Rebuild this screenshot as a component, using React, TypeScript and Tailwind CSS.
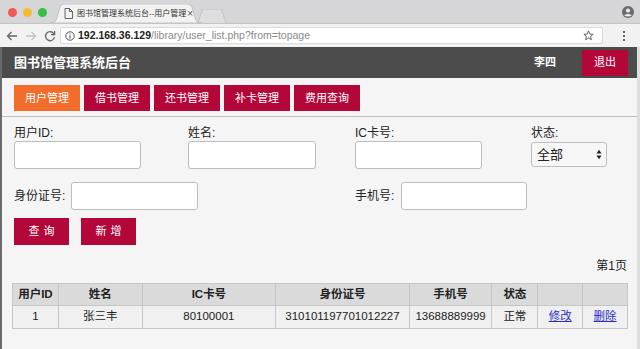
import React from "react";

const font = { fontFamily: '"Helvetica", "Liberation Sans", "Noto Sans CJK SC", sans-serif' };

function Input({ w = "w-[127px]", h = "h-[28px]" }: { w?: string; h?: string }) {
  return <div className={`${w} ${h} bg-white border border-[#bdbdbd] rounded-[3px]`} />;
}

function RedBtn({ children, className = "" }: { children: React.ReactNode; className?: string }) {
  return (
    <div className={`flex items-center justify-center bg-[#b3073a] text-white text-[11px] ${className}`}>
      {children}
    </div>
  );
}

export default function App() {
  const navs = ["用户管理", "借书管理", "还书管理", "补卡管理", "费用查询"];
  const cols = [
    { t: "用户ID", w: "w-[45px]" },
    { t: "姓名", w: "w-[84px]" },
    { t: "IC卡号", w: "w-[134px]" },
    { t: "身份证号", w: "w-[134px]" },
    { t: "手机号", w: "w-[83px]" },
    { t: "状态", w: "w-[46px]" },
    { t: "", w: "w-[45px]" },
    { t: "", w: "w-[45px]" },
  ];
  const row = ["1", "张三丰", "80100001", "310101197701012227", "13688889999", "正常", "修改", "删除"];
  return (
    <div className="w-[640px] h-[349px] overflow-hidden bg-[#f6f5f6] text-[#222]" style={font}>
      {/* tab bar */}
      <div className="relative h-[23px] bg-[#d6d5d7] flex items-end">
        <div className="absolute left-[8px] top-[8px] flex gap-[6px]">
          <div className="w-[9px] h-[9px] rounded-full bg-[#f25a56]" />
          <div className="w-[9px] h-[9px] rounded-full bg-[#f7bb2f]" />
          <div className="w-[9px] h-[9px] rounded-full bg-[#36c040]" />
        </div>
        <div className="relative ml-[50px] w-[152px] h-[19px]">
          <svg className="absolute inset-0" width="152" height="19" viewBox="0 0 152 19">
            <path d="M0 19 C6 19 6 17 8 10 L10 3 C11 1 12 0 15 0 L137 0 C140 0 141 1 142 3 L144 10 C146 17 146 19 152 19 Z" fill="#f2f2f2" stroke="#b9b9b9" strokeWidth="0.8" />
          </svg>
          <div className="relative flex items-center h-full pl-[14px] pr-[9px] text-[8px] text-[#333]">
            <svg width="9" height="11" viewBox="0 0 9 11" className="mr-[4px] shrink-0">
              <path d="M1 0.5 H5.5 L8.5 3.5 V10.5 H1 Z M5.5 0.5 V3.5 H8.5" fill="none" stroke="#555" strokeWidth="0.9" />
            </svg>
            <span className="whitespace-nowrap">图书馆管理系统后台--用户管理</span>
            <span className="ml-auto text-[10px] leading-none text-[#555]">×</span>
          </div>
        </div>
        <div className="ml-[-4px] w-[28px] h-[14px]">
          <svg width="28" height="14" viewBox="0 0 28 14">
            <path d="M0 14 L4 2 C5 0 6 0 8 0 L20 0 C22 0 23 0 24 2 L28 14" fill="#dedede" stroke="#bcbcbc" strokeWidth="0.8" />
          </svg>
        </div>
        <div className="absolute right-[6px] top-[6px]">
          <svg width="12" height="12" viewBox="0 0 12 12">
            <circle cx="6" cy="6" r="6" fill="#6b6b6b" />
            <circle cx="6" cy="4.6" r="2.1" fill="#e9e9e9" />
            <path d="M2.4 9.6 C3.2 7.6 8.8 7.6 9.6 9.6 C8.6 10.8 3.4 10.8 2.4 9.6 Z" fill="#e9e9e9" />
          </svg>
        </div>
      </div>
      {/* toolbar */}
      <div className="h-[24px] bg-[#f2f2f2] border-t border-[#c4c4c4] flex items-center">
        <svg width="12" height="12" viewBox="0 0 12 12" className="ml-[6px]">
          <path d="M11 6 H1.5 M5.5 2 L1.5 6 L5.5 10" fill="none" stroke="#666" strokeWidth="1.3" />
        </svg>
        <svg width="12" height="12" viewBox="0 0 12 12" className="ml-[7px]">
          <path d="M1 6 H10.5 M6.5 2 L10.5 6 L6.5 10" fill="none" stroke="#c4c4c4" strokeWidth="1.3" />
        </svg>
        <svg width="12" height="12" viewBox="0 0 12 12" className="ml-[7px]">
          <path d="M10 4 A4.5 4.5 0 1 0 10.5 7" fill="none" stroke="#666" strokeWidth="1.3" />
          <path d="M10.6 1 V4.6 H7" fill="none" stroke="#666" strokeWidth="1.3" />
        </svg>
        <div className="ml-[4px] w-[543px] h-[17px] bg-white border border-[#dadada] rounded-[2px] flex items-center text-[10.5px]">
          <svg width="10" height="10" viewBox="0 0 10 10" className="ml-[4px] mr-[3px]">
            <circle cx="5" cy="5" r="4.2" fill="none" stroke="#555" strokeWidth="1" />
            <path d="M5 4.2 V7.4" stroke="#555" strokeWidth="1.1" />
            <circle cx="5" cy="2.8" r="0.65" fill="#555" />
          </svg>
          <span className="font-bold text-[#222]">192.168.36.129</span>
          <span className="text-[#8a8a8a]">/library/user_list.php?from=topage</span>
          <svg width="11" height="11" viewBox="0 0 12 12" className="ml-auto mr-[8px]">
            <path d="M6 1 L7.5 4.4 L11 4.7 L8.3 7 L9.1 10.6 L6 8.7 L2.9 10.6 L3.7 7 L1 4.7 L4.5 4.4 Z" fill="none" stroke="#555" strokeWidth="1" />
          </svg>
        </div>
        <div className="ml-[20px] flex flex-col gap-[2px]">
          <div className="w-[2px] h-[2px] bg-[#666]" />
          <div className="w-[2px] h-[2px] bg-[#666]" />
          <div className="w-[2px] h-[2px] bg-[#666]" />
        </div>
      </div>
      {/* page */}
      <div className="border-l-2 border-l-[#6a6a6a] border-r-[3px] border-r-[#dedede] h-[302px]">
        <div className="h-[31px] bg-[#4c4c4c] flex items-center pl-[12px]">
          <span className="text-white font-bold text-[13px]">图书馆管理系统后台</span>
          <span className="ml-auto text-white font-bold text-[11px]">李四</span>
          <div className="ml-[26px] mr-[9px] w-[46px] h-[26px] bg-[#b3073a] text-white text-[11px] flex items-center justify-center">退出</div>
        </div>
        <div className="h-[39px] flex items-start gap-[4px] pl-[12px] pt-[7px] border-b border-[#bdbdbd]">
          {navs.map((n, i) => (
            <div
              key={n}
              className={`w-[66px] h-[26px] flex items-center justify-center text-[11px] text-white ${i === 0 ? "bg-[#f26c2c]" : "bg-[#b3073a]"}`}
            >
              {n}
            </div>
          ))}
        </div>
        {/* form */}
        <div className="pl-[12px] pt-[8px] text-[12px]">
          <div className="flex">
            <div className="w-[174px]">
              <div className="h-[16px] leading-[16px]">用户ID:</div>
              <Input />
            </div>
            <div className="w-[167px]">
              <div className="h-[16px] leading-[16px]">姓名:</div>
              <Input w="w-[128px]" />
            </div>
            <div className="w-[176px]">
              <div className="h-[16px] leading-[16px]">IC卡号:</div>
              <Input />
            </div>
            <div>
              <div className="h-[17px] leading-[16px]">状态:</div>
              <div className="w-[76px] h-[25px] bg-[#f7f7f7] border border-[#bdbdbd] rounded-[3px] flex items-center pl-[5px] pr-[4px] text-[13px]">
                全部
                <svg width="6" height="11" viewBox="0 0 6 11" className="ml-auto">
                  <path d="M0.5 4.5 L3 0.8 L5.5 4.5 Z M0.5 6.5 L3 10.2 L5.5 6.5 Z" fill="#222" />
                </svg>
              </div>
            </div>
          </div>
          <div className="flex items-center mt-[13px]">
            <div className="w-[57px]">身份证号:</div>
            <Input />
            <div className="ml-[157px] w-[46px]">手机号:</div>
            <Input w="w-[126px]" />
          </div>
          <div className="flex gap-[12px] mt-[8px]">
            <RedBtn className="w-[55px] h-[27px] tracking-[4px] pl-[4px]">查询</RedBtn>
            <RedBtn className="w-[55px] h-[27px] tracking-[4px] pl-[4px]">新增</RedBtn>
          </div>
        </div>
        <div className="flex justify-end pr-[10px] mt-[13px] text-[12px] h-[17px] leading-[17px]">第1页</div>
        <div className="ml-[10px] mt-[8px] w-[616px] text-[11.5px]">
          <div className="flex bg-[#dadada] border border-[#c6c6c6] h-[23px]">
            {cols.map((c, i) => (
              <div
                key={i}
                className={`${c.w} flex items-center justify-center font-bold ${i > 0 ? "border-l border-[#c6c6c6]" : ""}`}
              >
                {c.t}
              </div>
            ))}
          </div>
          <div className="flex bg-[#f0f0f0] border border-t-0 border-[#c6c6c6] h-[23px]">
            {row.map((v, i) => (
              <div
                key={i}
                className={`${cols[i].w} flex items-center justify-center ${i > 0 ? "border-l border-[#c6c6c6]" : ""} ${i >= 6 ? "text-[#2b2bc8] underline" : ""}`}
              >
                {v}
              </div>
            ))}
          </div>
        </div>
      </div>
    </div>
  );
}
